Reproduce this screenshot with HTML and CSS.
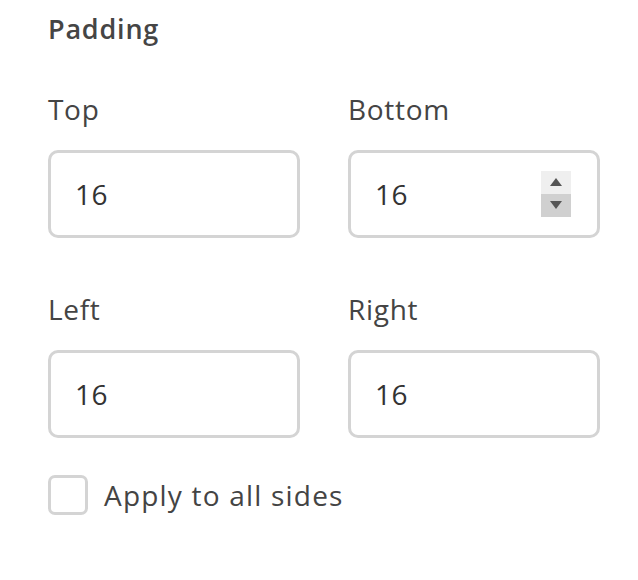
FILE: index.html
```html
<!DOCTYPE html>
<html lang="en">
<head>
    <meta charset="UTF-8">
    <meta name="viewport" content="width=device-width, initial-scale=1.0">
    <title>Padding</title>
    <link rel="stylesheet" href="styles.css">
</head>
<body>
    <div class="panel">
        <h2>Padding</h2>
        <div class="fields">
            <div class="field">
                <label for="top">Top</label>
                <div class="box"><input type="text" id="top" value="16"></div>
            </div>
            <div class="field">
                <label for="bottom">Bottom</label>
                <div class="box">
                    <input type="text" id="bottom" value="16">
                    <div class="spinner">
                        <span class="up"></span>
                        <span class="down"></span>
                    </div>
                </div>
            </div>
            <div class="field">
                <label for="left">Left</label>
                <div class="box"><input type="text" id="left" value="16"></div>
            </div>
            <div class="field">
                <label for="right">Right</label>
                <div class="box"><input type="text" id="right" value="16"></div>
            </div>
        </div>
        <label class="check">
            <span class="checkbox"></span>
            Apply to all sides
        </label>
    </div>
</body>
</html>
```

FILE: styles.css
```css
body {
    margin: 0;
    padding: 0;
    background-color: #fff;
    font-family: "Open Sans", Arial, sans-serif;
    color: #444;
}

.panel {
    padding: 9px 0 0 48px;
}

h2 {
    margin: 0;
    font-size: 27px;
    font-weight: 600;
    letter-spacing: 0.8px;
    line-height: 40px;
    color: #454545;
}

.fields {
    display: grid;
    grid-template-columns: 252px 252px;
    column-gap: 48px;
    row-gap: 51px;
    margin-top: 40px;
}

.field label {
    display: block;
    font-size: 28px;
    letter-spacing: 0.7px;
    line-height: 40px;
    margin-bottom: 21px;
}

.box {
    position: relative;
    height: 88px;
    border: 3px solid #d4d4d4;
    border-radius: 10px;
    box-sizing: border-box;
}

.box input {
    display: block;
    width: 100%;
    height: 100%;
    border: none;
    outline: none;
    background: transparent;
    padding: 0 0 0 24px;
    box-sizing: border-box;
    font-family: inherit;
    font-size: 28px;
    letter-spacing: 0.5px;
    color: #333;
}

.spinner {
    position: absolute;
    right: 26px;
    top: 18px;
    width: 30px;
    display: flex;
    flex-direction: column;
}

.spinner span {
    position: relative;
    display: block;
    height: 23px;
}

.spinner .up {
    background-color: #efefef;
}

.spinner .down {
    background-color: #d0d0d0;
}

.spinner span::after {
    content: "";
    position: absolute;
    left: 9px;
    top: 7px;
    border-left: 6px solid transparent;
    border-right: 6px solid transparent;
}

.spinner .up::after {
    border-bottom: 8px solid #555;
}

.spinner .down::after {
    border-top: 8px solid #555;
}

.check {
    display: flex;
    align-items: center;
    gap: 16px;
    margin-top: 37px;
    font-size: 28px;
    letter-spacing: 1.2px;
    line-height: 40px;
}

.checkbox {
    flex: none;
    width: 40px;
    height: 40px;
    border: 3px solid #d4d4d4;
    border-radius: 7px;
    box-sizing: border-box;
}
```
